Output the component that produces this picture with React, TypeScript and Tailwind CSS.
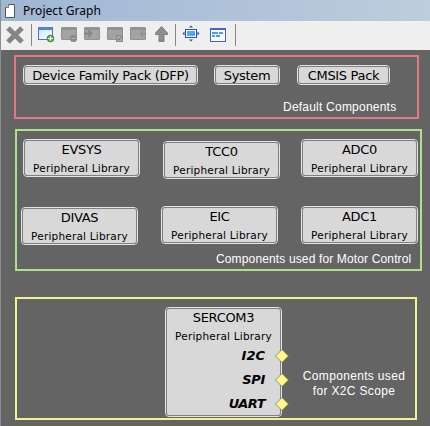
import type { ReactNode } from "react";

const verdana = "font-['DejaVu_Sans',sans-serif]";
const arial = "font-['Liberation_Sans',sans-serif]";

function Icon({ className, children }: { className: string; children: ReactNode }) {
  return (
    <svg className={"block shrink-0 " + className} viewBox="0 0 18 18" width="18" height="18" fill="none">
      {children}
    </svg>
  );
}

function GrayWindow() {
  return (
    <>
      <rect x="1.5" y="2.5" width="15" height="12" rx="0.5" fill="#a3a3a3" stroke="#929292" />
      <path d="M1 4h16" stroke="#929292" strokeWidth="2" />
    </>
  );
}

function Divider({ className }: { className: string }) {
  return <div className={"h-[22px] w-px shrink-0 bg-[#858585] " + className} />;
}

function Toolbar() {
  return (
    <div className="flex h-[29px] items-start bg-[#efefef] pt-[3px]">
      <svg className="mt-[1px] ml-[4px] block shrink-0" width="20" height="20" viewBox="0 0 20 20">
        <path d="M3 3l14 14M17 3l-14 14" stroke="#858585" strokeWidth="5" />
      </svg>
      <Divider className="ml-[6px]" />
      <Icon className="mt-[1px] ml-[5px]">
        <defs>
          <linearGradient id="pane" x1="0" y1="0" x2="1" y2="1">
            <stop offset="0" stopColor="#c8e5ff" />
            <stop offset="1" stopColor="#ffffff" />
          </linearGradient>
        </defs>
        <rect x="1.500" y="2.500" width="14" height="12" fill="url(#pane)" stroke="#4974bd" />
        <path d="M1 3.500h15" stroke="#4f84d2" strokeWidth="3" />
        <circle cx="13.500" cy="13.500" r="3.700" fill="#4d9138" />
        <path d="M13.500 11.200v4.600M11.200 13.500h4.600" stroke="#fff" strokeWidth="1.300" />
      </Icon>
      <Icon className="mt-[1px] ml-[5px]">
        <GrayWindow />
        <circle cx="13.500" cy="13.500" r="3.500" fill="#888" />
        <path d="M11.700 13.500h3.600" stroke="#bbb" />
      </Icon>
      <Icon className="mt-[1px] ml-[5px]">
        <GrayWindow />
        <path d="M1 8.500h7M5 5l3.500 3.500-3.500 3.500" stroke="#858585" strokeWidth="1.800" />
      </Icon>
      <Icon className="mt-[1px] ml-[5px]">
        <GrayWindow />
        <rect x="10.500" y="10.500" width="6" height="6" fill="#aaa" stroke="#888" />
        <path d="M11.500 13.500l1.500 1.500 2.500-3.500" stroke="#777" />
      </Icon>
      <Icon className="mt-[1px] ml-[5px]">
        <GrayWindow />
        <path d="M14.500 6l-3 3 3 3M12 9h5" stroke="#858585" />
      </Icon>
      <Icon className="mt-[1px] ml-[6px]">
        <path d="M8.500 1.500l6 6.500v1.500h-3.500v7h-5v-7h-3.500v-1.500z" fill="#8d8d8d" stroke="#7f7f7f" />
      </Icon>
      <Divider className="ml-[4px]" />
      <Icon className="mt-[1px] ml-[6px]">
        <rect x="3.500" y="4.500" width="11" height="8" fill="#fff" stroke="#2b50b5" />
        <rect x="5" y="6" width="8" height="5" fill="#55a3f7" />
        <path d="M9 0.500l2 2h-4zM9 16.500l2-2h-4zM0.500 8.500l2-2v4zM17.500 8.500l-2-2v4z" fill="#2548b3" />
      </Icon>
      <Icon className="mt-[2px] ml-[9px]">
        <rect x="1.500" y="2.500" width="15" height="13" fill="#f8fbff" stroke="#3f63bd" />
        <path d="M1 3h16" stroke="#3c68cc" strokeWidth="2" />
        <path d="M3 7h6M10 7h4M3 10h3M7 10h4" stroke="#4e9af2" strokeWidth="2" />
      </Icon>
      <Divider className="ml-[8px]" />
    </div>
  );
}

type NodeProps = { box: string; title: string; library?: boolean; children?: ReactNode };

function GraphNode({ box, title, library = false, children }: NodeProps) {
  return (
    <div className={"absolute rounded-[4px] border border-[#e3e3e3] " + box}>
      <div className={"h-full rounded-[3px] border border-[#808080] bg-[#d8d8d8] text-center whitespace-nowrap text-black " + verdana}>
        <div className="mt-px h-[16px] text-[13px] leading-[16px] tracking-[-0.32px]">{title}</div>
        {library && <div className="mt-[3px] text-[10.5px] leading-[14px] tracking-[0.2px]">Peripheral Library</div>}
        {children}
      </div>
    </div>
  );
}

function Port({ name, tracking }: { name: string; tracking: string }) {
  return (
    <div className="relative flex h-[24px] items-center justify-end pr-[15px]">
      <span className={"text-[13px] leading-[16px] font-bold italic " + tracking}>{name}</span>
      <svg className="absolute top-[5px] -right-[8.5px]" width="14" height="14" viewBox="0 0 14 14">
        <path d="M7 0.500l6.500 6.500-6.500 6.500-6.500-6.500z" fill="#fff88c" stroke="#6b6b60" strokeWidth="0.700" />
      </svg>
    </div>
  );
}

export default function App() {
  return (
    <div className="flex h-[426px] w-[430px] flex-col overflow-hidden border-l border-[#8c8c8c] bg-[#646464]">
      <header className="flex h-[21px] shrink-0 items-center bg-linear-to-r from-[#9fb6d4] to-[#bdcddd]">
        <svg className="ml-[3px] block" width="12" height="14" viewBox="0 0 12 14">
          <path d="M4.500 0.500h6v13h-9v-10z" fill="#fff" stroke="#555" />
          <path d="M4.500 0.500v3h-3" fill="#ddd" stroke="#777" />
        </svg>
        <span className="ml-[7px] font-['Noto_Sans',sans-serif] text-[12px] leading-[16px] tracking-[0.05px] text-black">Project Graph</span>
      </header>
      <Toolbar />
      <main className="relative -ml-px flex-1">
        <section className="absolute top-[5px] left-[14px] h-[64px] w-[405px] border-2 border-[#e87880]" />
        <section className="absolute top-[79px] left-[15px] h-[142px] w-[407px] border-2 border-[#b0e087]" />

        <GraphNode box="left-[23px] top-[15px] w-[175px] h-[20px]" title="Device Family Pack (DFP)" />
        <GraphNode box="left-[214px] top-[15px] w-[66px] h-[20px]" title="System" />
        <GraphNode box="left-[297px] top-[15px] w-[93px] h-[20px]" title="CMSIS Pack" />
        <p className={"absolute top-[50px] left-[283px] text-[12px] leading-[15px] tracking-[0.22px] whitespace-nowrap text-white " + arial}>Default Components</p>

        <GraphNode box="left-[23px] top-[89px] w-[117px] h-[38px]" title="EVSYS" library />
        <GraphNode box="left-[163px] top-[91px] w-[117px] h-[38px]" title="TCC0" library />
        <GraphNode box="left-[301px] top-[89px] w-[117px] h-[38px]" title="ADC0" library />
        <GraphNode box="left-[21px] top-[157px] w-[117px] h-[38px]" title="DIVAS" library />
        <GraphNode box="left-[161px] top-[156px] w-[117px] h-[38px]" title="EIC" library />
        <GraphNode box="left-[301px] top-[156px] w-[117px] h-[38px]" title="ADC1" library />
        <p className={"absolute top-[202px] left-[216px] text-[12px] leading-[15px] tracking-[0.14px] whitespace-nowrap text-white " + arial}>Components used for Motor Control</p>

        <GraphNode box="left-[165px] top-[257px] w-[117px] h-[110px]" title="SERCOM3" library>
          <div className="mt-px">
            <Port name="I2C" tracking="tracking-[0px]" />
            <Port name="SPI" tracking="tracking-[-0.3px]" />
            <Port name="UART" tracking="tracking-[-0.5px]" />
          </div>
        </GraphNode>
        <section className="absolute top-[247px] left-[15px] h-[123px] w-[402px] border-2 border-[#eff58a]" />
        <p className={"absolute top-[319px] left-[302px] w-[104px] text-center text-[12px] leading-[15px] tracking-[0.33px] whitespace-nowrap text-white " + arial}>
          Components used
          <br />
          for X2C Scope
        </p>
      </main>
    </div>
  );
}
